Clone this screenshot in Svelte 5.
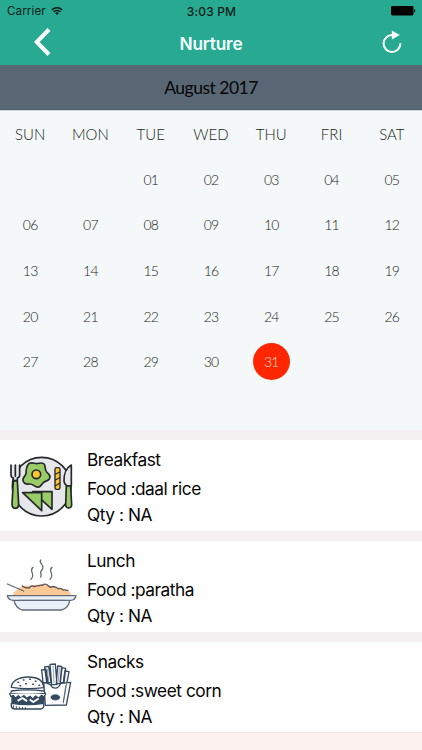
<script lang="ts">
	interface Meal {
		name: string;
		food: string;
		qty: string;
		icon: 'plate' | 'bowl' | 'burger';
	}

	const weekdays: string[] = ['SUN', 'MON', 'TUE', 'WED', 'THU', 'FRI', 'SAT'];

	// August 2017 starts on a Tuesday.
	const leadingBlanks = 2;
	const days: string[] = [
		...Array(leadingBlanks).fill(''),
		...Array.from({ length: 31 }, (_, i) => String(i + 1).padStart(2, '0'))
	];

	let selected = $state('31');

	const meals: Meal[] = [
		{ name: 'Breakfast', food: 'daal rice', qty: 'NA', icon: 'plate' },
		{ name: 'Lunch', food: 'paratha', qty: 'NA', icon: 'bowl' },
		{ name: 'Snacks', food: 'sweet corn', qty: 'NA', icon: 'burger' }
	];
</script>

<div class="screen">
	<header>
		<div class="status">
			<span class="carrier">
				Carrier
				<svg width="12" height="10" viewBox="0 0 14 11" fill="none" stroke="#0b1a17" stroke-width="1.8">
					<path d="M1 4.3a8.5 8.5 0 0 1 12 0M3.1 6.5a5.5 5.5 0 0 1 7.8 0" />
					<path d="M7 10.2 4.9 8.1a3 3 0 0 1 4.2 0z" fill="#0b1a17" stroke="none" />
				</svg>
			</span>
			<span class="time">3:03 PM</span>
			<svg class="battery" width="25" height="10" viewBox="0 0 25 10">
				<rect width="22.5" height="9.5" rx="1.4" />
				<path d="M23.2 3.2c1.6.3 1.6 2.9 0 3.2z" />
			</svg>
		</div>
		<div class="bar">
			<button type="button" aria-label="Back">
				<svg width="17" height="28" viewBox="0 0 17 28" fill="none" stroke="#fff" stroke-width="4">
					<path d="M15 1.5 2.7 14 15 26.5" />
				</svg>
			</button>
			<h1>Nurture</h1>
			<button type="button" aria-label="Refresh">
				<svg width="20" height="24" viewBox="0 0 20 24">
					<path d="M10.2 5.1A8.4 8.4 0 1 0 18.4 13.3" fill="none" stroke="#fff" stroke-width="2" />
					<path d="M9.8.5 17.8 4.9 9.8 9.5z" fill="#fff" />
				</svg>
			</button>
		</div>
	</header>

	<div class="month">August 2017</div>

	<div class="calendar">
		{#each weekdays as day (day)}
			<span class="weekday">{day}</span>
		{/each}
		{#each days as day, i (i)}
			<span class="day" class:selected={day !== '' && day === selected}>{day}</span>
		{/each}
	</div>

	<main>
		{#each meals as meal (meal.name)}
			<article>
				{#if meal.icon === 'plate'}
					<svg class="icon" viewBox="0 0 252 252" stroke="#252629" stroke-width="5" stroke-linejoin="round" stroke-linecap="round">
						<circle cx="125" cy="125" r="88" fill="#e6e7ea" />
						<path d="M84 59c6-10 17-4 25-3s17-7 24 2c5 8 0 15 7 23 7 7 14 12 8 21-6 8-14 5-19 12-6 8-10 15-21 11-8-3-10-9-20-8-12 1-19-3-19-13 0-8 8-11 9-19 1-10-1-16 6-26z" fill="#99cb67" />
						<circle cx="109" cy="88" r="13" fill="#fcc42f" />
						<path d="M98 140h58v53z" fill="#99cb67" />
						<path d="M68 143h57v54z" fill="#99cb67" />
						<rect x="165" y="68" width="15" height="65" rx="5" fill="#fcc42f" stroke-width="4" />
						<path d="m166 88 13-7M166 105l13-7M166 122l13-7" stroke-width="3.5" />
						<path d="M33 60v29q0 8 7 10v8h12v-8q7-2 7-10V60M46 60v34" fill="#e6e7ea" />
						<path d="M40 108h12l4 70q-1 12-10 12t-10-12z" fill="#99cb67" />
						<path d="M214 60c-15 8-23 28-22 49 0 7 5 11 9 14h13z" fill="#e6e7ea" />
						<path d="M199 123h13l3 57q-1 9-9 9t-9-9z" fill="#99cb67" />
					</svg>
				{:else if meal.icon === 'bowl'}
					<svg class="icon" viewBox="0 3 252 252" fill="none" stroke="#646a78" stroke-width="4" stroke-linejoin="round" stroke-linecap="round">
						<path d="M37 151c4-13 20-20 30-27 15-4 21 0 33-4 12 0 20-4 34-2 9 6 22 3 31 9 17 2 30 7 39 11 8 4 9 8 10 13z" fill="#ffc995" stroke="none" />
						<path d="m22 117 49 21" />
						<path d="M67 123c3 4 7 1 9 5 4 2 8-1 12 1 3-6 8-8 13-5 5 2 8-3 13-2 4 2 9-4 14-1 1-5 12-5 16 1 4 1 4 6 9 5 5-4 9-3 13 0 4-3 6 6 11 4 5-3 9 2 13 4 4-2 8 1 14 2" stroke="#55545b" />
						<path d="M42 166c3 17 11 24 24 29h118c16-4 23-12 25-29z" fill="#e8f1f7" />
						<path d="M22 152h206c-2 9-7 14-16 14H40c-10 0-16-5-18-14z" fill="#e8f1f7" />
						<path d="M57 166h136" stroke="#646a78" stroke-width="3" />
						<path d="M99 67c-12 11 2 16-1 26q-1 6-5 10M122 45c-6 9 8 12 7 23-1 8-9 9-7 17 2 6 3 7 0 11M156 67c-12 11 2 16-1 26q-1 6-5 10" />
					</svg>
				{:else}
					<svg class="icon" viewBox="0 -3 252 252" fill="#fff" stroke="#34495e" stroke-width="4" stroke-linejoin="round" stroke-linecap="round">
						<path d="m129 103-4-37 13-2 6 40zM140 103l-6-46 12-2 7 49zM181 103l5-44 11 2-5 43zM190 104l5-35 12 2-7 37zM169 107l4-53 12 1-5 52zM155 110l-5-61 16-1 5 62z" />
						<path d="M159 54l3 50M142 63l4 36M178 60l-3 40M194 66l-3 29" stroke-width="1.5" />
						<path d="M131 104q21 2 26 14 18 8 25-12l30-3-13 68-63 1z" />
						<path d="m200 107-10 58M197 113l-7 49" stroke-width="2" />
						<ellipse cx="166" cy="148" rx="13" ry="8" fill="#34495e" stroke-width="2" />
						<path d="M34 118c0-18 22-31 51-31s45 12 46 32q-49 7-97-1z" />
						<path d="M54 103h2M70 96h2M89 94h2M106 100h2M77 107h2M98 109h2M117 112h2M60 113h2" stroke-width="4.5" />
						<path d="M34 129q49-7 98 0l4 7q-53 6-104 0z" />
						<path d="M36 146q49-5 97 0l-2 20-95 1z" fill="#34495e" />
						<path d="M29 137l4 9 7-4 6 9 9-8 7 7 10-7 8 8 10-6 8 8 9-9 9 7 9-9 6 5 6-9" />
						<path d="M55 157l12-7 12 8M91 156l9 6 14-9" stroke="#fff" stroke-width="6" fill="none" />
						<path d="M34 166q49 8 97 0v10q-2 7-10 7H43q-9-1-9-8z" />
						<path d="M40 173v6M49 176v5M58 177v4M67 178v4M76 179v3" stroke-width="3" />
					</svg>
				{/if}
				<div class="details">
					<h2>{meal.name}</h2>
					<p>Food :{meal.food}</p>
					<p>Qty : {meal.qty}</p>
				</div>
			</article>
		{/each}
	</main>
</div>

<style>
	:global(body) {
		margin: 0;
	}

	.screen {
		display: flex;
		flex-direction: column;
		width: 422px;
		height: 750px;
		overflow: hidden;
		background: #fdf1f0;
		font-family: Inter, sans-serif;
		color: #050505;
	}

	header {
		box-sizing: border-box;
		height: 65px;
		background: #27aa91;
	}

	.status {
		display: grid;
		grid-template-columns: 1fr auto 1fr;
		align-items: center;
		height: 22px;
		padding: 0 6px 0 7px;
		font-size: 11.6px;
		color: #0b1a17;
	}

	.carrier {
		display: flex;
		align-items: center;
		gap: 5px;
		letter-spacing: 0.1px;
	}

	.time {
		font-weight: 500;
		font-size: 12px;
		letter-spacing: 0.15px;
	}

	.battery {
		justify-self: end;
		fill: #000;
	}

	.bar {
		display: grid;
		grid-template-columns: 1fr auto 1fr;
		align-items: center;
		height: 40px;
		padding: 0 20px 0 34px;
	}

	.bar button {
		display: flex;
		padding: 0;
		border: 0;
		background: none;
	}

	.bar button:last-child {
		justify-self: end;
	}

	.bar h1 {
		margin: 2px 14px 0 0;
		font-size: 17.3px;
		font-weight: 600;
		letter-spacing: -0.2px;
		color: #f4fffc;
	}

	.month {
		box-sizing: border-box;
		height: 45px;
		border-bottom: 1px solid #53606f;
		background: #596775;
		font-family: Lato, sans-serif;
		font-size: 17.5px;
		letter-spacing: -0.5px;
		line-height: 45px;
		text-align: center;
	}

	.calendar {
		box-sizing: border-box;
		display: grid;
		grid-template-columns: repeat(7, 1fr);
		grid-auto-rows: 45.7px;
		align-content: start;
		justify-items: center;
		align-items: center;
		height: 320px;
		border-top: 1px solid #cbd3dc;
		background: #f4f8f9;
		font-family: Lato, sans-serif;
		font-weight: 300;
		color: #1c1e20;
	}

	.weekday {
		font-size: 15px;
	}

	.day {
		width: 37px;
		height: 37px;
		margin-top: -1px;
		border-radius: 50%;
		font-size: 14px;
		letter-spacing: -0.8px;
		line-height: 37px;
		text-align: center;
	}

	.selected {
		background: #ff2600;
		color: #ffe0da;
	}

	main {
		display: flex;
		flex-direction: column;
		gap: 10px;
		padding-top: 10px;
		background: #f4f0f2;
	}

	article {
		box-sizing: border-box;
		display: flex;
		height: 91px;
		padding-top: 5px;
		background: #fff;
	}

	article:last-child {
		border-bottom: 1px solid #e9e4e6;
	}

	.icon {
		flex: none;
		width: 84px;
		height: 84px;
	}

	.details {
		padding: 2px 0 0 3px;
		font-size: 17.3px;
		letter-spacing: -0.45px;
		line-height: 26px;
	}

	.details h2 {
		margin: 0 0 3px;
		font-size: inherit;
		font-weight: 400;
	}

	.details p {
		margin: 0;
	}
</style>
